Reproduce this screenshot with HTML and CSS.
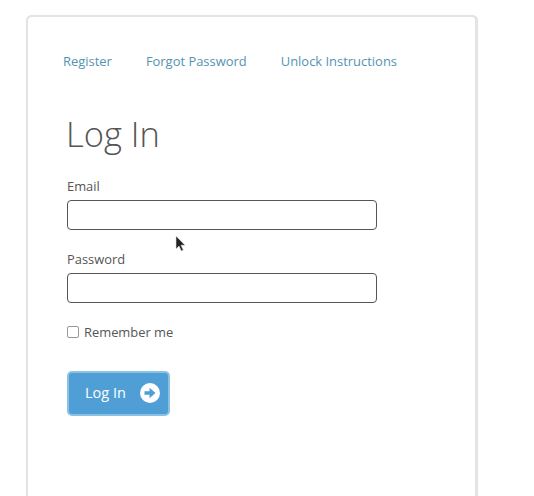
FILE: index.html
```html
<!DOCTYPE html>
<html lang="en">
<head>
<meta charset="utf-8">
<title>Log In</title>
<link rel="stylesheet" href="styles.css">
</head>
<body>
<main class="card">
  <nav class="links">
    <a href="#">Register</a>
    <a href="#">Forgot Password</a>
    <a href="#">Unlock Instructions</a>
  </nav>
  <form class="form">
    <h1 class="title">Log In</h1>
    <div class="field">
      <label class="label" for="email">Email</label>
      <input class="input" id="email" type="text">
    </div>
    <div class="field">
      <label class="label" for="password">Password</label>
      <input class="input" id="password" type="password">
    </div>
    <label class="remember"><span class="check"></span>Remember me</label>
    <button class="button" type="button">Log In
      <svg class="arrow" width="20" height="20" viewBox="0 0 20 20"><circle cx="10" cy="10" r="10" fill="#fff"/><path d="M4.500 8.200h5V4.800l6 5.200-6 5.200v-3.400h-5z" fill="#4f9fd6"/></svg>
    </button>
  </form>
</main>
<svg class="cursor" width="12" height="18" viewBox="0 0 12 18"><path d="M1 1v13l3-3 2.300 5 2-1-2.300-4.800h4z" fill="#222" stroke="#ddd" stroke-width=".6"/></svg>
</body>
</html>
```
FILE: styles.css
```css
html, body {
  margin: 0;
  height: 496px;
  overflow: hidden;
  background: #fff;
}
body {
  padding: 15px 0 0 26px;
  box-sizing: border-box;
  font-family: "Open Sans", sans-serif;
  color: #555;
}
.card {
  width: 452px;
  height: 481px;
  box-sizing: border-box;
  border: 2px solid #e4e4e4;
  border-right-width: 3px;
  border-bottom: 0;
  border-radius: 6px 6px 0 0;
  background: #fff;
  box-shadow: 0 0 1px #ddd;
  padding: 35px 0 0 35px;
}
.links {
  display: flex;
  gap: 34px;
  font-size: 12.950px;
  line-height: 18px;
}
.links a {
  color: #5493b2;
  text-decoration: none;
}
.form {
  padding: 41px 0 0 4px;
}
.title {
  margin: 0 0 20px -1px;
  font-size: 34.500px;
  line-height: 46px;
  font-weight: 300;
  color: #555;
}
.field {
  margin-bottom: 20px;
}
.label {
  display: block;
  font-size: 12.900px;
  line-height: 18px;
  margin-bottom: 5px;
}
.input {
  display: block;
  width: 310px;
  height: 30px;
  box-sizing: border-box;
  border: 1px solid #555;
  border-radius: 4px;
  background: #fff;
  margin: 0;
}
.remember {
  display: flex;
  align-items: center;
  gap: 5px;
  font-size: 12.900px;
  line-height: 18px;
  margin-top: 20px;
}
.check {
  width: 12px;
  height: 12px;
  box-sizing: border-box;
  border: 1px solid #999;
  border-radius: 2px;
}
.button {
  display: flex;
  align-items: center;
  gap: 15px;
  width: 103px;
  height: 45px;
  box-sizing: border-box;
  margin-top: 30px;
  padding: 0 0 2px 16px;
  border: 2px solid #8cc1e6;
  border-radius: 5px;
  background: #4f9fd6;
  color: #fff;
  font-family: inherit;
  font-size: 14.500px;
}
.arrow {
  flex: none;
  margin-left: -1px;
}
.cursor {
  position: absolute;
  left: 175px;
  top: 235px;
}
```
